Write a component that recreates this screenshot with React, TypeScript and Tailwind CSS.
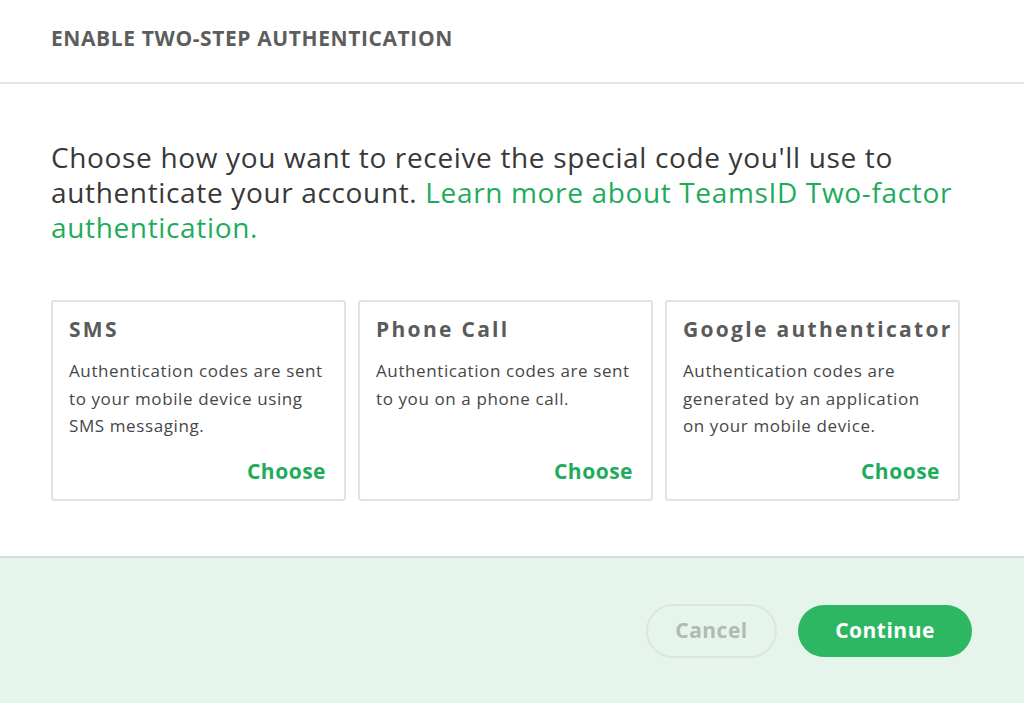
import React from "react";

const cards = [
  { title: "SMS", desc: "Authentication codes are sent to your mobile device using SMS messaging." },
  { title: "Phone Call", desc: "Authentication codes are sent to you on a phone call." },
  { title: "Google authenticator", desc: "Authentication codes are generated by an application on your mobile device." },
];

export default function App() {
  return (
    <div className="w-[1024px] h-[703px] bg-white flex flex-col overflow-hidden" style={{ fontFamily: '"Open Sans", sans-serif' }}>
      <div className="h-[84px] shrink-0 flex items-center px-[51px] border-b-2 border-[#e4e4e4]">
        <h1 className="text-[21px] font-bold text-[#5c5d5d] tracking-[0.6px] pb-[4px]">ENABLE TWO-STEP AUTHENTICATION</h1>
      </div>
      <div className="flex-1 px-[51px] pt-[56px]">
        <p className="text-[28px] leading-[35px] text-[#383838] tracking-[0.65px]">
          Choose how you want to receive the special code you'll use to authenticate your account.{" "}
          <span className="text-[#1eac5c]">Learn more about TeamsID Two-factor authentication.</span>
        </p>
        <div className="flex gap-[12px] mt-[55px]">
          {cards.map((c) => (
            <div key={c.title} className="w-[295px] h-[201px] border-2 border-[#e2e2e2] rounded-[3px] pl-[16px] pr-[16px] pt-[12px] pb-[12px] flex flex-col">
              <div className="text-[21px] font-bold text-[#5a5b5b] tracking-[2.3px] leading-[30px] whitespace-nowrap">{c.title}</div>
              <div className="text-[17px] leading-[27.5px] text-[#474747] tracking-[0.6px] mt-[13px]">{c.desc}</div>
              <div className="mt-auto text-right text-[21px] font-bold text-[#1eac5c] tracking-[0.5px] leading-[28px] pr-[2px] pb-[2px]">Choose</div>
            </div>
          ))}
        </div>
      </div>
      <div className="h-[147px] shrink-0 bg-[#e5f5ec] border-t-2 border-[#d8dcd8] flex items-center justify-end pr-[52px] gap-[21px]">
        <button className="w-[131px] h-[54px] rounded-full border-2 border-[#dfe3e0] text-[21px] font-bold text-[#b4b8b6] tracking-[0.5px]">Cancel</button>
        <button className="w-[174px] h-[52px] rounded-full bg-[#2db763] text-[21px] font-bold text-white tracking-[0.5px]">Continue</button>
      </div>
    </div>
  );
}
